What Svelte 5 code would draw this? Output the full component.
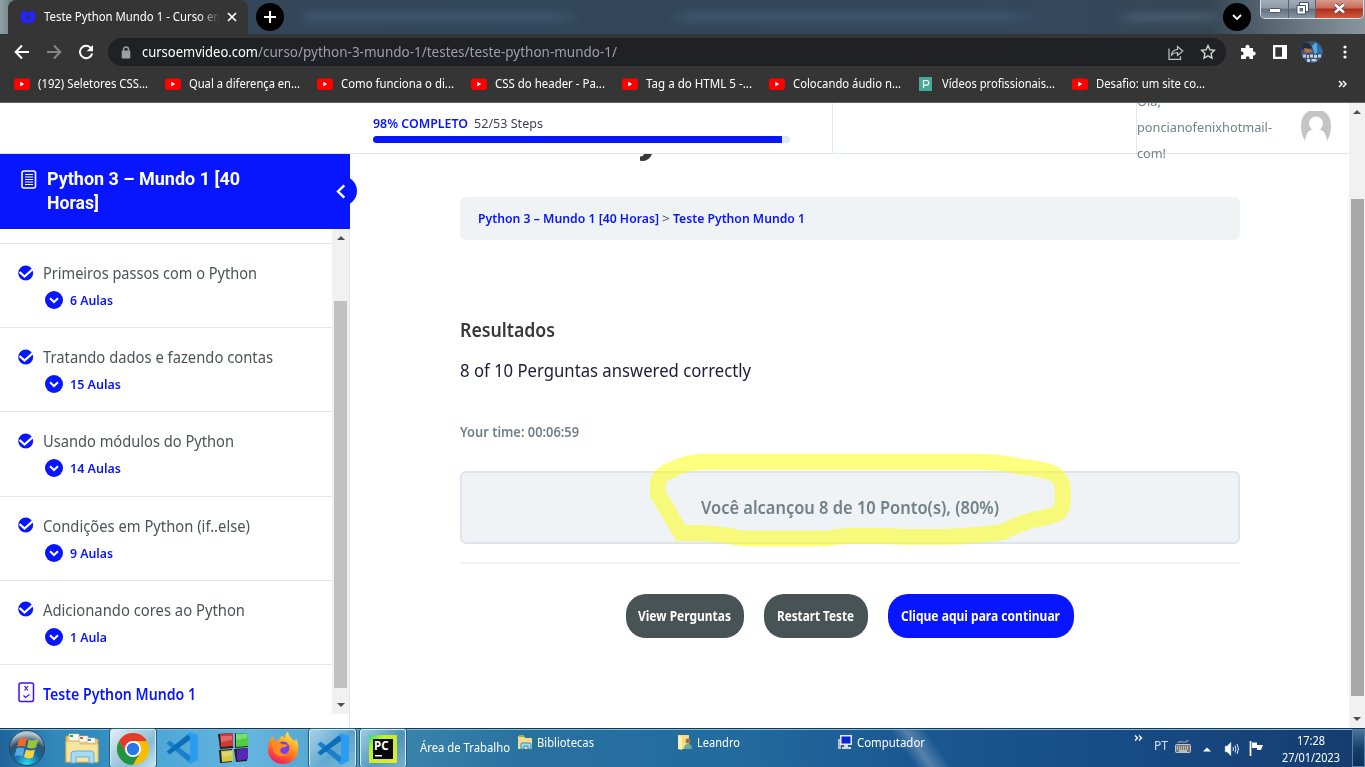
<script>
  // Condenses or widens a run of text so it takes exactly the given width.
  function fit(node, width) {
    const natural = node.getBoundingClientRect().width;
    node.style.transform = `scaleX(${width / natural})`;
    node.style.marginRight = `${width - natural}px`;
  }

  const bookmarks = [
    { label: '(192) Seletores CSS...', w: 110 },
    { label: 'Qual a diferença en...', w: 111 },
    { label: 'Como funciona o di...', w: 113 },
    { label: 'CSS do header - Pa...', w: 110 },
    { label: 'Tag a do HTML 5 -...', w: 106 },
    { label: 'Colocando áudio n...', w: 108 },
    { label: 'Vídeos profissionais...', w: 113, doc: true },
    { label: 'Desafio: um site co...', w: 109 }
  ];

  const lessons = [
    { title: 'Primeiros passos com o Python', w: 214, sub: '6 Aulas', sw: 43 },
    { title: 'Tratando dados e fazendo contas', w: 230, sub: '15 Aulas', sw: 51 },
    { title: 'Usando módulos do Python', w: 191, sub: '14 Aulas', sw: 51 },
    { title: 'Condições em Python (if..else)', w: 207, sub: '9 Aulas', sw: 43 },
    { title: 'Adicionando cores ao Python', w: 202, sub: '1 Aula', sw: 37 }
  ];
</script>

{#snippet t(text, width)}<span class="t" use:fit={width}>{text}</span>{/snippet}

{#snippet vscode()}
  <svg width="34" height="34" viewBox="0 0 34 34">
    <path d="M1.500 12.500 4.500 9.500 25 24.500v7.500z" fill="#1b80cb" />
    <path d="M1.500 20.500 4.500 23.500 25 9V1.500z" fill="#0d6fb8" />
    <path d="M24.500 1 33 4v25l-8.500 4-2.500-2.500 3-2V5.500l-3-2z" fill="#2a9df0" />
  </svg>
{/snippet}

<div class="screen">
  <div class="tabs">
    <div class="tab">
      <svg width="16" height="14" viewBox="0 0 16 14"><path d="M3 1Q8 3 13 1l2 1v8q-3 4-7 3Q3 14 1 10V2z" fill="#2424ff" /><path d="m6.500 4 5 3-5 3z" fill="#30306f" /></svg>
      <div class="tabtitle">{@render t('Teste Python Mundo 1 - Curso em', 180)}</div>
      <svg class="close" width="10" height="10" viewBox="0 0 10 10"><path d="m1 1 8 8M9 1 1 9" stroke="#fff" stroke-width="1.700" /></svg>
    </div>
    <div class="round"><svg width="14" height="14" viewBox="0 0 14 14"><path d="M7 1v12M1 7h12" stroke="#fff" stroke-width="2" /></svg></div>
    <div class="blurline"></div>
    <div class="round"><svg width="12" height="8" viewBox="0 0 12 8"><path d="m2 2 4 4 4-4" stroke="#fff" stroke-width="1.800" fill="none" /></svg></div>
    <div class="winbtns">
      <div class="min"><svg width="12" height="5" viewBox="0 0 12 5"><rect x=".5" y=".5" width="11" height="4" rx="1" fill="#fff" stroke="#4b566a" /></svg></div>
      <div class="res"><svg width="13" height="13" viewBox="0 0 13 13"><path d="M3.500.500h9v9h-9z" fill="#fff" stroke="#47506b" /><path d="M1 3.500h8.500V12H1z" fill="#fff" stroke="#47506b" /><path d="M4 6.500h2.500V9H4z" fill="#9aa6b8" stroke="#47506b" /></svg></div>
      <div class="cls"><svg width="13" height="11" viewBox="0 0 13 11"><path d="m2 1.500 9 8M11 1.500l-9 8" stroke="#593a48" stroke-width="4" /><path d="m2 1.500 9 8M11 1.500l-9 8" stroke="#fff" stroke-width="2.500" /></svg></div>
    </div>
  </div>

  <div class="toolbar">
    <svg class="nav" width="16" height="16" viewBox="0 0 16 16"><path d="M15 8H2M8 1.500 1.700 8 8 14.500" fill="none" stroke="#fff" stroke-width="2" /></svg>
    <svg class="nav" width="16" height="16" viewBox="0 0 16 16"><path d="M1 8h13M8 1.500 14.300 8 8 14.500" fill="none" stroke="#858585" stroke-width="2" /></svg>
    <svg class="nav" width="16" height="16" viewBox="0 0 16 16"><path d="M13.300 4.500A6.200 6.200 0 1 0 14.200 9.500" fill="none" stroke="#fff" stroke-width="2" /><path d="M15 1v6.300H8.700z" fill="#fff" /></svg>
    <div class="omni">
      <svg class="lock" width="10" height="13" viewBox="0 0 10 13"><path d="M2.500 5V3.500a2.500 2.500 0 0 1 5 0V5" fill="none" stroke="#9aa0a6" stroke-width="1.500" /><rect x=".7" y="4.500" width="8.600" height="8" rx="1" fill="#9aa0a6" /></svg>
      <div class="url"><b>{@render t('cursoemvideo.com', 116)}</b>{@render t('/curso/python-3-mundo-1/testes/teste-python-mundo-1/', 359)}</div>
      <svg class="share" width="16" height="15" viewBox="0 0 16 15" fill="none" stroke="#c4c4c4" stroke-width="1.200"><path d="M1 3.500v10.800h11.500v-3" /><path d="M3.500 10q.5-5 6-5.500V1.500l5.300 4.500-5.300 4.500V7.500Q6 7.300 3.500 10z" /></svg>
      <svg width="16" height="16" viewBox="0 0 16 16"><path d="m8 1.500 1.900 4.300 4.600.5-3.400 3.200.9 4.700L8 11.800l-4 2.400.9-4.700L1.500 6.300l4.600-.5z" fill="none" stroke="#d0d0d0" stroke-width="1.400" /></svg>
    </div>
    <svg class="puzzle" width="16" height="16" viewBox="0 0 16 16"><path d="M1 4h4.500V2.800a2 2 0 0 1 4 0V4H13v3.500h.700a2 2 0 0 1 0 4H13V15H9.500v-1a1.800 1.800 0 0 0-3.600 0v1H1v-3.800h.8a1.800 1.800 0 0 0 0-3.600H1z" fill="#fff" /></svg>
    <svg class="panel" width="14" height="14" viewBox="0 0 14 14"><path fill="#fff" fill-rule="evenodd" d="M0 0h14v14H0zM2.300 2.300v9.400H9V2.300z" /></svg>
    <svg class="me" width="22" height="22" viewBox="0 0 22 22"><defs><clipPath id="mec"><circle cx="11" cy="11" r="11" /></clipPath></defs><g clip-path="url(#mec)"><path fill="#3d5578" d="M0 0h22v22H0z" /><path d="M0 2h8l3 5-7 2-4-1z" fill="#222b3a" /><path d="m11 5 4-4 3 8-4 5z" fill="#51a7e0" /><path d="m3 7 6 1 3 3-8 1z" fill="#b0713f" /><path d="m16 2 5 7v4l-5-3z" fill="#2f6faa" /><path d="M2 13.500h3v3H2zM6 14h2v3H6zM9 13.500h3v3H9zM13 14h3v3h-3zM17 13.500h3v3h-3zM6 18h3v3H6zM10.500 18h5v2.500h-5z" fill="#c3cedd" /></g></svg>
    <svg width="4" height="14" viewBox="0 0 4 14" fill="#fff"><circle cx="2" cy="2" r="1.600" /><circle cx="2" cy="7" r="1.600" /><circle cx="2" cy="12" r="1.600" /></svg>
  </div>

  <div class="bookmarks">
    {#each bookmarks as b}
      <div class="bm">
        {#if b.doc}
          <svg width="16" height="16" viewBox="0 0 16 16"><path fill="#48a999" d="M1 1h13v14H1z" /><path d="M5.500 12V4.500h3a2.300 2.300 0 0 1 0 4.600h-3" fill="none" stroke="#fff" stroke-width="1.200" /></svg>
        {:else}
          <svg width="16" height="16" viewBox="0 0 16 16"><rect y="2.500" width="16" height="11.500" rx="2.500" fill="#f00" /><path d="M6.300 5.800v4.600L10.200 8.100z" fill="#fff" /></svg>
        {/if}
        {@render t(b.label, b.w)}
      </div>
    {/each}
    <svg class="more" width="9" height="8" viewBox="0 0 9 8"><path d="m1 1 3 3-3 3M5 1l3 3-3 3" fill="none" stroke="#fff" stroke-width="1.500" /></svg>
  </div>

  <div class="page">
    <div class="view">
      <header>
        <div class="logo"></div>
        <div class="progress">
          <div class="ptext"><b>{@render t('98% COMPLETO', 95)}</b>{@render t('52/53 Steps', 69)}</div>
          <div class="bar"><i></i></div>
        </div>
        <div class="blank"></div>
        <div class="user">
          <div class="hello">{@render t('Olá,', 24)}<br />{@render t('poncianofenixhotmail-', 135)}<br />{@render t('com!', 29)}</div>
          <svg width="30" height="30" viewBox="0 0 30 30"><path d="M8 0h14q8 4 8 15 0 8-4 15H4Q0 23 0 15 0 4 8 0z" fill="#c4c4c4" /><ellipse cx="15" cy="12.500" rx="7" ry="7" fill="#fff" /><path d="M4 30q1-10 7-11.500h8Q25 20 26 30z" fill="#fff" /></svg>
        </div>
      </header>
      <div class="body">
        <aside>
          <div class="course">
            <svg width="16" height="19" viewBox="0 0 16 19" fill="none" stroke="#fff"><rect x="1" y="1" width="13.500" height="17" rx="2" stroke-width="1.600" /><path d="M4 4.500h8M4 7h8M4 9.500h8M4 12h8M4 14.500h8" /></svg>
            <div>{@render t('Python 3 – Mundo 1 [40', 193)}<br />{@render t('Horas]', 52)}</div>
            <div class="toggle"><svg width="10" height="15" viewBox="0 0 10 15"><path d="M8.300 1.300 2 7.500l6.300 6.200" fill="none" stroke="#fff" stroke-width="2.400" /></svg></div>
          </div>
          <div class="side">
            <div class="list">
              {#each lessons as l}
                <div class="lesson">
                  <svg class="ok" width="16" height="16" viewBox="0 0 16 16"><circle cx="7.700" cy="8" r="7.500" fill="#0816ff" /><path d="m1.500 7 5 4.500L16 3" fill="none" stroke="#fff" stroke-width="2.300" /></svg>
                  <div class="info">
                    <div class="name">{@render t(l.title, l.w)}</div>
                    <div class="sub"><svg width="18" height="18" viewBox="0 0 18 18"><circle cx="9" cy="9" r="9" fill="#0816ff" /><path d="M5 7.200 9 11l4-3.800" fill="none" stroke="#fff" stroke-width="2" /></svg>{@render t(l.sub, l.sw)}</div>
                  </div>
                </div>
              {/each}
              <div class="quiz"><svg width="17" height="21" viewBox="0 0 17 21" fill="none" stroke="#3c0ff5"><rect x="1" y="1" width="14.500" height="18.500" rx="2" stroke-width="1.500" /><path d="m6.500 4 3.500 4.500M10 4 6.500 8.500M5.500 13.500l2 2 4-3" stroke-width="1.200" /></svg>{@render t('Teste Python Mundo 1', 153)}</div>
            </div>
            <div class="scroll s1"><i class="up"></i><div class="thumb"></div><i class="down"></i></div>
          </div>
        </aside>
        <main>
          <svg class="tail" width="16" height="8" viewBox="0 0 16 8"><path d="M3 0h12Q12 7 6 7 4 7 3 6.500V2.500q3 .5 4-2.500z" fill="#383838" /></svg>
          <nav><b>{@render t('Python 3 – Mundo 1 [40 Horas]', 181)}</b><span class="gt">{@render t('>', 8)}</span><b>{@render t('Teste Python Mundo 1', 132)}</b></nav>
          <h4>{@render t('Resultados', 95)}</h4>
          <p class="count">{@render t('8 of 10 Perguntas answered correctly', 291)}</p>
          <p class="time">{@render t('Your time: 00:06:59', 119)}</p>
          <div class="score">
            {@render t('Você alcançou 8 de 10 Ponto(s), (80%)', 298)}
            <svg class="marker" width="430" height="100" viewBox="645 450 430 100"><path d="M675 533H703Q725 535 743 538.500H827Q840 536 850 536H887L903 537H943Q975 536 1003 532 1020 523 1033 520 1048 517 1056.700 514 1062.500 509 1062.700 503V485Q1059 475 1050 472 1036 468 1020 466.700 1000 462 981.700 461.700H700Q680 464 672 470 659 474 657.700 484V494L668 511 680 532" fill="none" stroke="#ff0" stroke-opacity=".5" stroke-width="16" stroke-linejoin="round" /></svg>
          </div>
          <div class="rule"></div>
          <div class="actions">
            <button style="width:118px">{@render t('View Perguntas', 93)}</button>
            <button style="width:104px">{@render t('Restart Teste', 77)}</button>
            <button class="go" style="width:186px">{@render t('Clique aqui para continuar', 159)}</button>
          </div>
        </main>
      </div>
    </div>
    <div class="scroll s2"><i class="up"></i><div class="thumb"></div><i class="down"></i></div>
  </div>

  <div class="taskbar">
    <div class="app start"><svg width="38" height="38" viewBox="0 0 38 38"><defs><radialGradient id="orb" cx=".5" cy=".95" r=".85"><stop offset="0" stop-color="#27dcf8" /><stop offset=".45" stop-color="#16689d" /><stop offset=".75" stop-color="#30526d" /><stop offset="1" stop-color="#b0c4d2" /></radialGradient></defs><circle cx="19" cy="19" r="17.500" fill="url(#orb)" stroke="#24465d" /><path d="M11 10q4-3 8-.5L17 18q-4-2-8 0z" fill="#ee682b" /><path d="M20.500 10.500q5 2 10-.5L28 18.500q-4 2-9 0z" fill="#98c33c" /><path d="M8.500 19.500q4-2 8 0l-2 8q-4-2-8 0z" fill="#55a9e4" /><path d="M18 20.500q5 2 9 0l-2 8q-5 2-9-.5z" fill="#fbd146" /></svg></div>
    <div class="app files"><svg width="34" height="34" viewBox="0 0 34 34"><path d="M1 5h11l2 3h19v23H1z" fill="#edce74" stroke="#c49c42" /><path d="M4 3h10v7H4zM14 5h9v6h-9zM22 7h8v5h-8z" fill="#fff" stroke="#d5bb76" stroke-width=".6" /><path d="M5 4h3v2H5z" fill="#19af32" /><path d="M15 6h3v2h-3z" fill="#e75632" /><path d="M23 8h3v2h-3z" fill="#338cdb" /><path d="M1 10h12l3 3h17v18H1z" fill="#f8e49e" stroke="#d6b766" /><path d="M6 32V23q0-3 4-3h16q3 0 3 3v9h-5v-6H11v6z" fill="#a7dbf3" stroke="#66afd8" /></svg></div>
    <div class="app open chrome"><svg width="32" height="32" viewBox="0 0 32 32"><circle cx="16" cy="16" r="16" fill="#fbbc05" /><path d="M2.140 8A16 16 0 0 1 29.860 8H16L9.100 20z" fill="#e33b2e" /><path d="M2.140 8A16 16 0 0 0 16 32l6.900-12H9.100z" fill="#229342" /><circle cx="16" cy="16" r="8" fill="#fff" /><circle cx="16" cy="16" r="6.200" fill="#2878e8" /></svg></div>
    <div class="app vs1">{@render vscode()}</div>
    <div class="app cubes"><svg width="32" height="32" viewBox="0 0 32 32"><path d="M1 2 16 1v15L3 17zM18 1l13 1v13l-13 1zM2 18l13-1v13L3 31zM17 17l13-1v13l-11 1z" fill="#271f25" /><path d="m3 2 13-1v13l-12 1z" fill="#d13939" /><path d="m19 1 12 1v12l-12 1z" fill="#4fce43" /><path d="m4 19 12-1v11L5 30z" fill="#d1ca3d" /><path d="m20 18 11-2v11l-11 2z" fill="#5628b5" /><path d="M4 4h11v4L4 10zM19 2h11v4l-11 2zM5 20l10-1v4L5 25z" fill="#fff" opacity=".25" /></svg></div>
    <div class="app fox"><svg width="32" height="32" viewBox="0 0 32 32"><defs><linearGradient id="fx" x1=".8" x2=".3" y2="1"><stop offset="0" stop-color="#fff44f" /><stop offset=".5" stop-color="#ff8a16" /><stop offset="1" stop-color="#f31460" /></linearGradient></defs><path d="M5 4 8 9l4-1q1-4 4-4 1 2 2 2 0-5 3-6 1 6 7 9l1-2q3 4 2 11a15 14 0 0 1-30 0Q1 10 5 4z" fill="url(#fx)" /><circle cx="16" cy="16" r="6.500" fill="#7542e5" /><path d="M4 9q6-1 11 3 4 0 6 1-3 3-7 3-3 6 7 7Q11 27 7 20z" fill="#ff8b21" /></svg></div>
    <div class="app open vs2">{@render vscode()}</div>
    <div class="app open pc"><svg width="28" height="28" viewBox="0 0 28 28"><defs><linearGradient id="pyc" x2="1" y2="1"><stop offset="0" stop-color="#21d789" /><stop offset=".25" stop-color="#b8ee30" /><stop offset="1" stop-color="#e9ea26" /></linearGradient></defs><path d="M0 0h28v28H0z" fill="url(#pyc)" /><path d="M4 4h20v20H4z" fill="#080808" /><path d="M6 20h7v1.500H6z" fill="#fff" /><text x="5" y="15" fill="#fff" font-family="Noto Sans, sans-serif" font-weight="700" font-size="11.500">PC</text></svg></div>
    <div class="deskbar">
      <div class="desk">{@render t('Área de Trabalho', 90)}</div>
      <div class="lnk l1"><svg width="16" height="16" viewBox="0 0 16 16"><path d="M1 2h6l1 2h7v11H1z" fill="#f5dc83" /><path d="M2 1h5v2H2z" fill="#83b46a" /><path d="M4 15v-5q0-1 1-1h7q2 0 2 1v5h-3v-3H7v3z" fill="#9bdcfa" stroke="#338ccb" /></svg>{@render t('Bibliotecas', 57)}</div>
      <div class="lnk l2"><svg width="16" height="16" viewBox="0 0 16 16"><path d="M1 1h11v14H1z" fill="#f6dc88" /><path d="M5 3 1 1v14l4 1z" fill="#fff0ae" /><circle cx="11" cy="7" r="2.500" fill="#a56e43" /><path d="M7 15q0-5 4-5t4 5z" fill="#69ad96" /></svg>{@render t('Leandro', 43)}</div>
      <div class="lnk l3"><svg width="16" height="16" viewBox="0 0 16 16"><path d="M1 5h3v10H1z" fill="#b4bcc4" /><path d="M3 1h12v10H3z" fill="#e7e7e7" /><path d="M4.500 2.500h9v7h-9z" fill="#0a24d8" /><path d="M7 11h4v2h3v2H5v-2h2z" fill="#d3d8dc" /></svg>{@render t('Computador', 68)}</div>
    </div>
    <svg class="chev" width="9" height="6" viewBox="0 0 9 6"><path d="m1 .5 2.500 2.500L1 5.500M5 .5 7.500 3 5 5.500" fill="none" stroke="#fff" stroke-width="1.300" /></svg>
    <div class="lang">{@render t('PT', 14)}</div>
    <svg class="kb" width="16" height="14" viewBox="0 0 16 14"><path d="M3 4q0-2 5-1 4 1 5-2" fill="none" stroke="#a0a5a8" stroke-width="1.200" /><rect x=".5" y="5.500" width="15" height="8" rx="1" fill="#777" stroke="#c3c3c3" /><path d="M2 8h12M2 10h12" stroke="#fff" stroke-dasharray="1 1" /><path d="M4 12h8" stroke="#fff" /></svg>
    <svg class="tri" width="8" height="5" viewBox="0 0 8 5"><path d="m0 4.500 4-4 4 4z" fill="#fff" /></svg>
    <svg class="snd" width="16" height="14" viewBox="0 0 16 14"><path d="M1 4h2l4-4v14l-4-4H1z" fill="#fff" stroke="#8da2b9" stroke-width=".5" /><path d="M9 5q1 2 0 4M11 3.500q2 3.500 0 7M13 2q3 5 0 10" fill="none" stroke="#e2edf5" /></svg>
    <svg class="flag" width="15" height="15" viewBox="0 0 15 15"><path d="M1.500 0v15" stroke="#fff" stroke-width="1.700" /><path d="M3 1.500h5V4h6l-2 5H8V7H3z" fill="#fff" /></svg>
    <div class="clock"><div>{@render t('17:28', 28)}</div><div>{@render t('27/01/2023', 58)}</div></div>
    <div class="show"></div>
  </div>
</div>

<style>
  :global(body) { margin: 0; overflow: hidden; }
  .screen, .screen * { box-sizing: border-box; }
  .screen { width: 1365px; height: 767px; display: flex; flex-direction: column; overflow: hidden; background: #fff; font-family: "Noto Sans", sans-serif; }
  svg { display: block; flex: none; }
  .t { display: inline-block; white-space: nowrap; transform-origin: 0 50%; flex: none; }
  b { font-weight: 600; }

  .tabs { height: 34px; flex: none; display: flex; padding-left: 8px; background: linear-gradient(90deg, #91a2a4 0, #71828d 10px, #34475a 245px, #30465a 500px, #34475b 1080px, #354654 1210px, #63717c 1290px, #89969e 1365px); }
  .tab { width: 240px; height: 34px; background: #353535; border-radius: 8px 8px 0 0; display: flex; align-items: center; padding-left: 12px; color: #fff; font-size: 12px; line-height: 16px; }
  .tabtitle { margin-left: 8px; width: 176px; overflow: hidden; flex: none; -webkit-mask-image: linear-gradient(90deg, #000 155px, transparent 176px); mask-image: linear-gradient(90deg, #000 155px, transparent 176px); }
  .close { margin-left: 7px; }
  .round { width: 28px; height: 28px; border-radius: 50%; background: #000; margin: 3px 0 0 8px; display: flex; align-items: center; justify-content: center; flex: none; }
  .blurline { flex: 1; height: 8px; margin: 13px 0 0 20px; filter: blur(4px); opacity: .3; background: linear-gradient(90deg, #6486aa 0 250px, transparent 280px 360px, #6486aa 390px 700px, transparent 740px 810px, #7797b8 830px); }
  .winbtns { width: 104px; height: 19px; margin: 0 1px 0 9px; display: flex; border: 1px solid #d8e0e4; border-top: 0; border-radius: 0 0 5px 5px; overflow: hidden; }
  .winbtns div { display: flex; justify-content: center; border-right: 1px solid #56636f; background: linear-gradient(#a3adb6, #8c99a5 45%, #63717d 50%, #8797a3); }
  .min { width: 28px; padding-top: 8px; }
  .res { width: 27px; padding-top: 2px; }
  .winbtns .cls { flex: 1; padding-top: 3px; border: 0; background: linear-gradient(#d89a8c, #c56b58 45%, #ac2e1a 50%, #ce5b40); }

  .toolbar { height: 36px; flex: none; background: #353535; display: flex; align-items: center; padding-left: 14px; }
  .nav { margin-right: 16px; }
  .omni { width: 1118px; height: 28px; margin-left: -2px; border-radius: 14px; background: #202124; display: flex; align-items: center; padding: 0 10px 0 13px; }
  .url { display: flex; margin-left: 11px; flex: 1; font-size: 13.500px; line-height: 20px; color: #9aa0a6; }
  .url b { color: #fff; font-weight: 400; display: flex; }
  .share { margin-right: 16px; }
  .puzzle { margin-left: 14px; }
  .panel { margin-left: 17px; }
  .me { margin: 0 20px 0 14px; }

  .bookmarks { height: 33px; flex: none; background: #353535; border-bottom: 1px solid #626262; display: flex; gap: 17px; padding: 0 18px 5px 14px; color: #fff; font-size: 12px; }
  .bm { display: flex; align-items: center; gap: 8px; }
  .more { margin: 10px 0 0 auto; }

  .page { height: 625px; flex: none; display: flex; overflow: hidden; }
  .view { width: 1349px; display: flex; flex-direction: column; }
  header { height: 51px; border-bottom: 1px solid #e2e7ed; display: flex; flex: none; }
  .logo { width: 350px; }
  .progress { width: 483px; border-right: 1px solid #e2e7ed; padding: 10px 0 0 23px; }
  .ptext { display: flex; gap: 6px; font-size: 13px; line-height: 20px; color: #423c55; height: 23px; }
  .ptext b { color: #0816ff; display: flex; }
  .bar { width: 417px; height: 7px; border-radius: 4px; background: #e2e7ed; overflow: hidden; }
  .bar i { display: block; width: 98%; height: 7px; background: #0816ff; }
  .blank { width: 303px; }
  .user { width: 213px; border-left: 1px solid #e2e7ed; height: 50px; display: flex; color: #728188; }
  .hello { width: 164px; margin-top: -15px; font-size: 13px; line-height: 26px; }
  .user svg { margin-top: 8px; }
  .body { flex: 1; display: flex; min-height: 0; }

  aside { width: 350px; border-right: 1px solid #e2e7ed; flex: none; display: flex; flex-direction: column; }
  .course { position: relative; width: 350px; height: 75px; background: #0816ff; color: #fff; display: flex; gap: 10px; padding: 13px 0 0 21px; font: 700 18px/24px Roboto, sans-serif; flex: none; }
  .course > svg { margin-top: 3px; }
  .toggle { position: absolute; right: -7px; top: 22px; width: 30px; height: 30px; border-radius: 50%; background: #0816ff; padding: 8px 0 0 9px; }
  .side { height: 485px; display: flex; }
  .list { width: 332px; padding-top: 14px; overflow: hidden; }
  .lesson { height: 84.200px; border-top: 1px solid #e2e7ed; display: flex; padding: 17px 0 0 18px; }
  .ok { margin-top: 3.500px; }
  .info { margin-left: 9px; }
  .name { font-size: 15.500px; line-height: 24px; color: #4d5457; height: 30px; }
  .sub { display: flex; align-items: center; gap: 7px; height: 18px; margin: 0 0 0 2px; font-size: 13px; font-weight: 600; color: #0816ff; }
  .quiz { border-top: 1px solid #e2e7ed; padding: 17px 0 0 18px; display: flex; gap: 8px; font-size: 15.500px; line-height: 24px; font-weight: 600; color: #0816ff; }

  .scroll { background: #f1f1f1; display: flex; flex-direction: column; align-items: center; width: 17px; }
  .scroll .thumb { width: 13px; flex: none; background: #c1c1c1; }
  .scroll i { border: 4px solid transparent; width: 0; height: 0; flex: none; }
  .scroll .up { border-bottom-color: #505050; border-top: 0; margin-top: 7px; }
  .scroll .down { border-top-color: #505050; border-bottom: 0; margin: auto 0 7px; }
  .s1 .thumb { height: 387px; margin-top: 61px; }
  .s2 { width: 16px; }
  .s2 .thumb { height: 497px; margin-top: 85px; background: #a8a8a8; }

  main { width: 780px; margin-left: 110px; }
  .tail { margin-left: 177px; height: 8px; }
  nav { margin-top: 35px; height: 43px; border-radius: 6px; background: #eff3f6; display: flex; align-items: center; padding: 0 0 2px 18px; font-size: 13px; color: #0816ff; }
  nav b { display: flex; }
  .gt { color: #4d5457; display: flex; margin: 0 3px; }
  h4 { margin: 75px 0 0; font-size: 19px; line-height: 30px; font-weight: 600; color: #383838; }
  p { margin: 0; }
  .count { margin-top: 10px; font-size: 17.500px; line-height: 30px; color: #1b1b3a; }
  .time { margin-top: 37px; font-size: 13.500px; line-height: 20px; font-weight: 600; color: #728188; }
  .score { position: relative; margin-top: 29px; height: 73px; border: 2px solid #dfe4eb; border-radius: 6px; background: #eff3f6; display: flex; align-items: center; justify-content: center; padding-bottom: 2px; font-size: 17.500px; font-weight: 600; color: #728188; }
  .marker { position: absolute; left: 183px; top: -23px; }
  .rule { height: 2px; margin-top: 18px; background: #eff3f6; }
  .actions { display: flex; justify-content: center; gap: 20px; margin-top: 30px; }
  button { height: 44px; border: 0; padding: 0 1px 0 0; border-radius: 20px; background: #485356; color: #fff; display: flex; align-items: center; justify-content: center; font: 700 13.500px/20px "Noto Sans", sans-serif; }
  button.go { background: #0816ff; }

  .taskbar { height: 39px; flex: none; display: flex; border-top: 1px solid #18334f; box-shadow: inset 0 1px #83bcdb; color: #fff; font-size: 12px; background: linear-gradient(55deg, transparent 750px, #ffffff40 763px, transparent 780px), linear-gradient(90deg, #1e649b 0, #3388bb 55px, #2f8bbe 95px, #4da6d5 155px, #66b6df 245px, #54a5d0 320px, #3982aa 410px, #28719f 530px, #226b9f 730px, #1b5891 910px, #174c86 1120px, #153d70 1345px); }
  .app { display: flex; align-items: center; justify-content: center; flex: none; height: 38px; }
  .start { width: 54px; }
  .files { width: 56px; }
  .open { border: 1px solid #d3edf9; border-bottom: 0; border-radius: 3px; box-shadow: 0 0 0 1px #295c78; background: linear-gradient(135deg, #d4eaf5a0, #8cbdd840 55%, #b4dcef80); }
  .chrome { width: 46px; background: linear-gradient(135deg, #e3edef, #87bed6 65%, #c7e6f1); }
  .vs1 { width: 52px; margin-right: 2px; }
  .cubes { width: 46px; }
  .fox { width: 53px; }
  .vs2 { width: 47px; }
  .pc { width: 46px; margin-left: 4px; }
  .deskbar { display: flex; width: 729px; line-height: 18px; padding-left: 14px; }
  .desk { width: 97px; padding-top: 10px; }
  .lnk { display: flex; gap: 4px; height: 18px; margin-top: 5px; width: 160px; }
  .lnk svg { margin-top: 0; }
  .taskbar > svg { margin-top: 14px; }
  .taskbar > .chev { margin: 6px 0 0; }
  .lang { margin: 9px 0 0 11px; line-height: 16px; height: 16px; color: #cfe1ee; }
  .taskbar > .kb { margin: 10px 0 0 7px; }
  .taskbar > .tri { margin: 18px 0 0 12px; }
  .taskbar > .snd { margin: 13px 0 0 13px; }
  .taskbar > .flag { margin: 12px 0 0 9px; }
  .clock { width: 60px; margin: 3px 11px 0 17px; display: flex; flex-direction: column; align-items: center; line-height: 17px; }
  .show { width: 13px; border: 1px solid #5681a7; background: linear-gradient(#48759f, #173f6b 50%, #0e2f5f); }
</style>
